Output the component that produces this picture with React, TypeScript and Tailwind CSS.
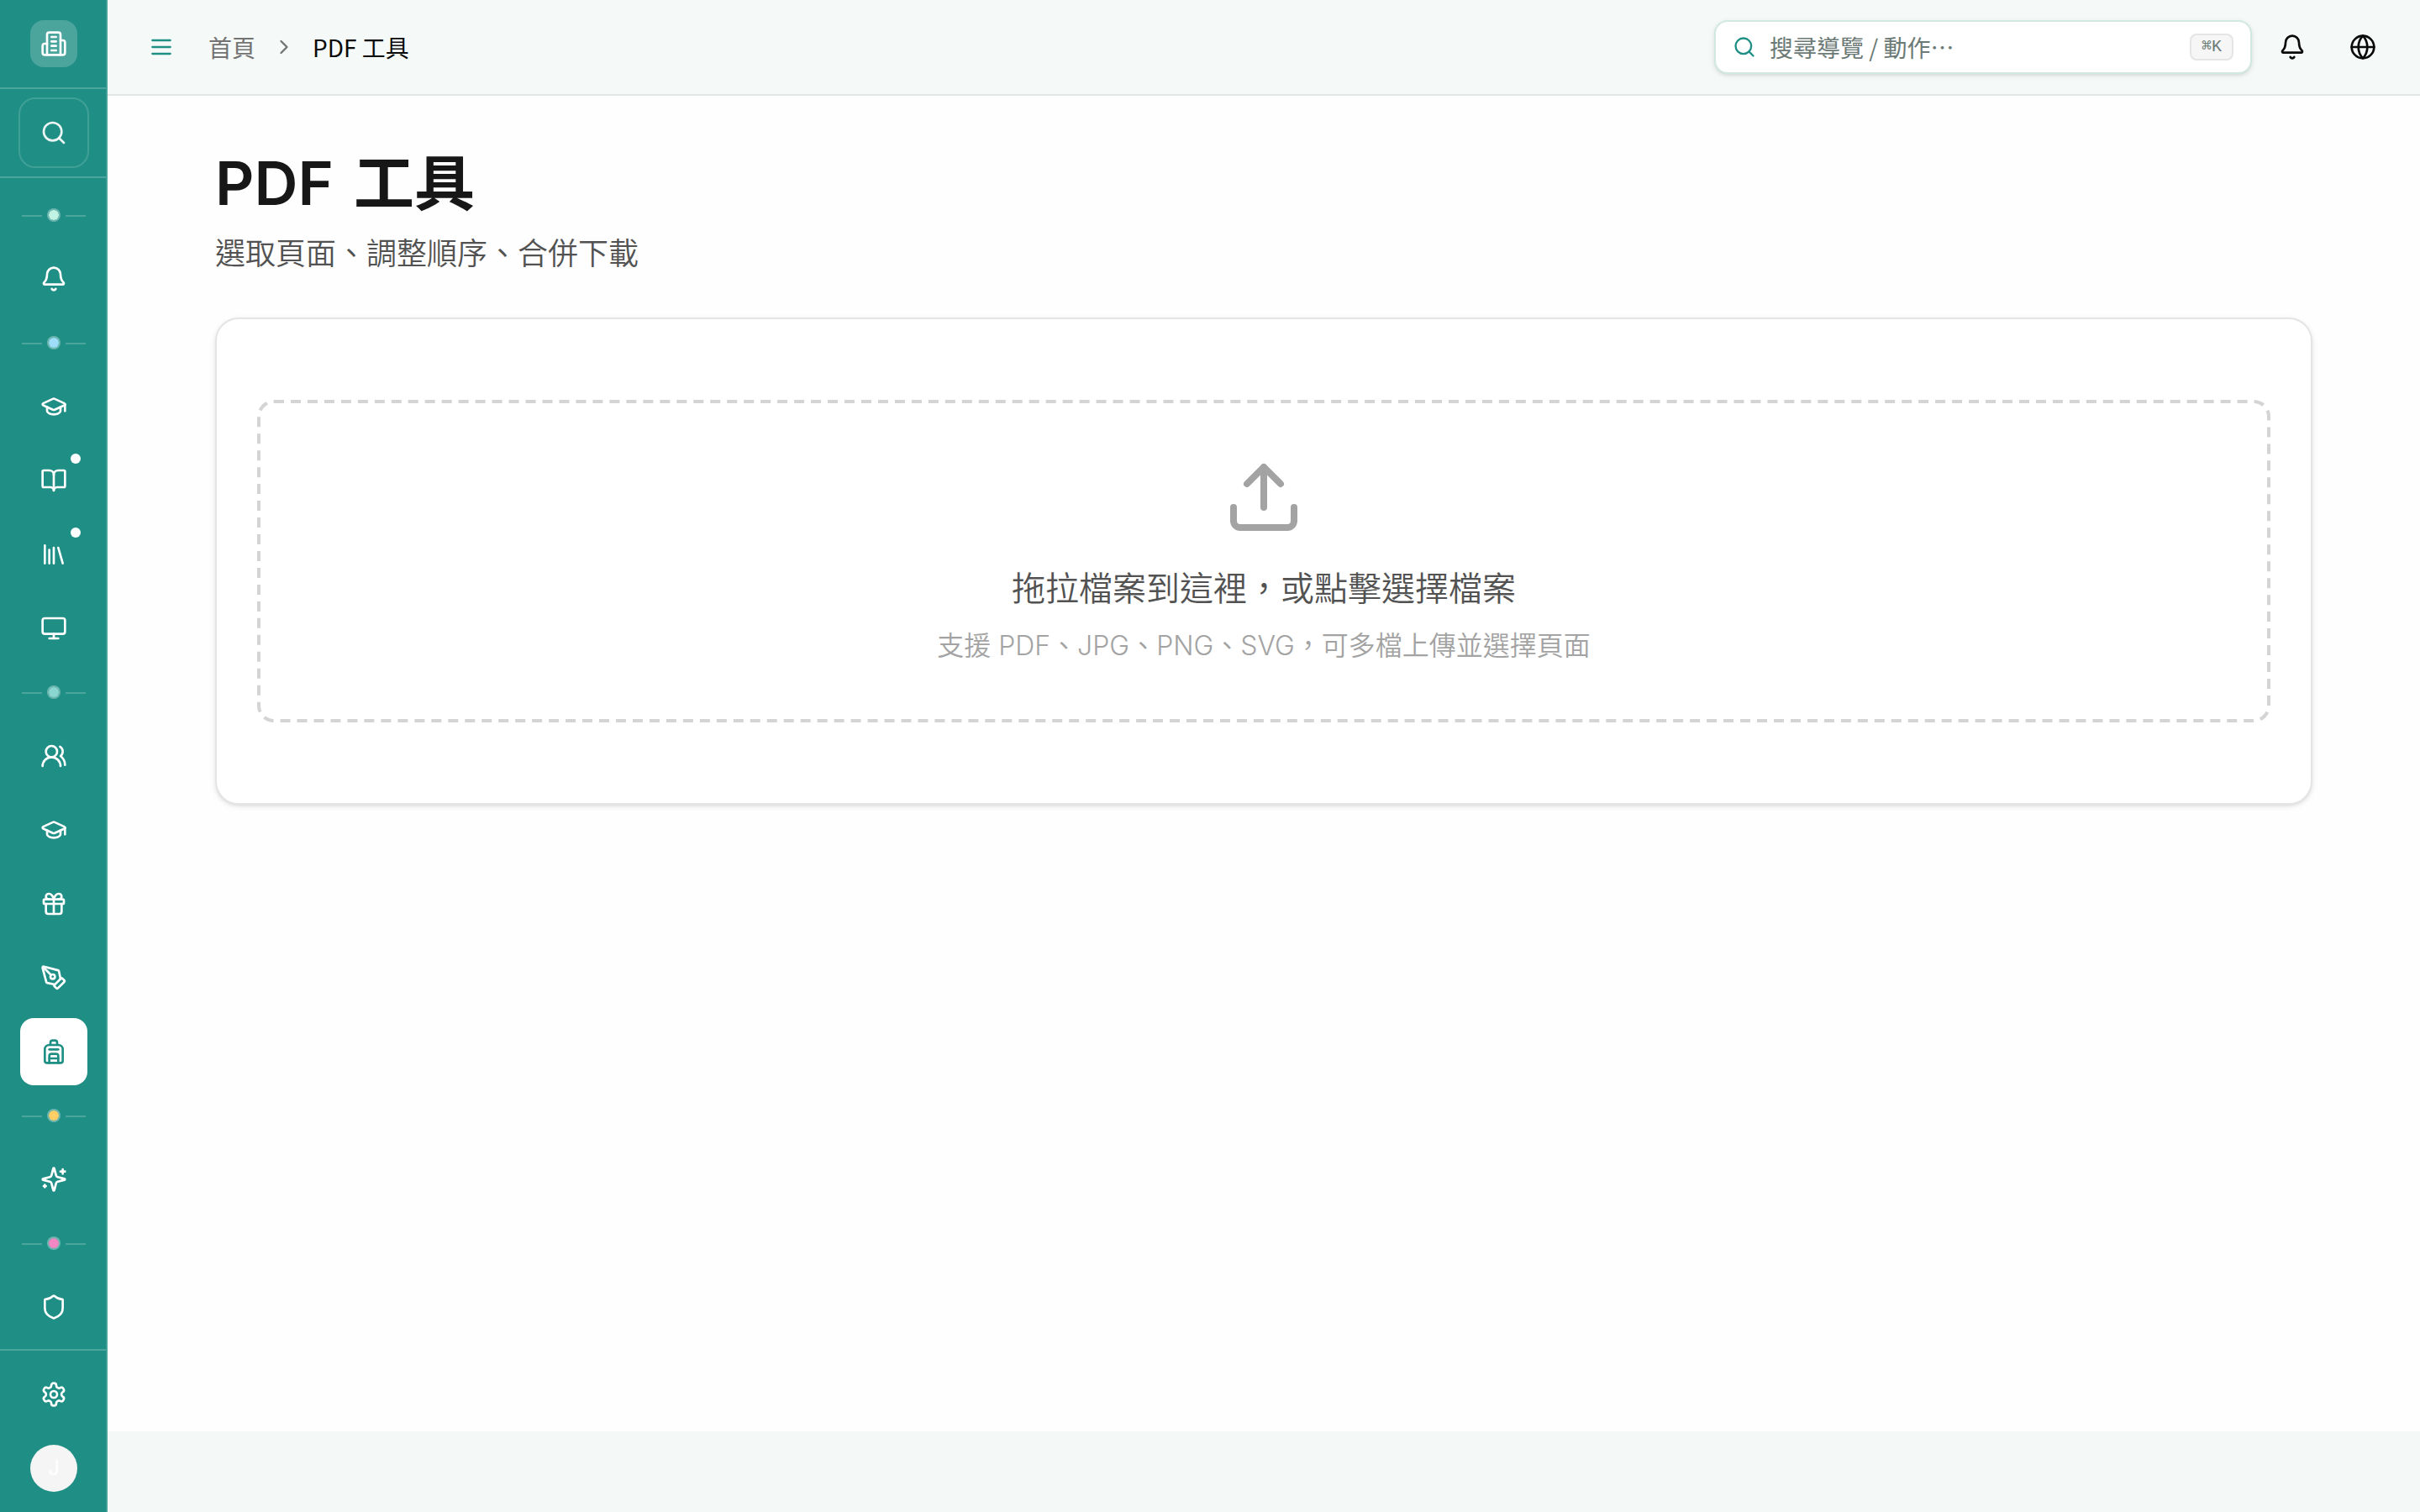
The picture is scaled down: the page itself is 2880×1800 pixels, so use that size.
import React from "react";
import { Bell, GraduationCap, BookOpen, Library, Monitor, UsersRound, Gift, PenTool, Backpack, Shield, Search, Globe, ChevronRight } from "lucide-react";

type IconType = React.ComponentType<{ className?: string; strokeWidth?: number }>;

const svgProps = {
  viewBox: "0 0 24 24",
  fill: "none",
  stroke: "currentColor",
  strokeWidth: 2,
  strokeLinecap: "round" as const,
  strokeLinejoin: "round" as const,
};

function BuildingIcon({ className }: { className?: string }) {
  return (
    <svg {...svgProps} className={className}>
      <path d="M6 22V4a2 2 0 0 1 2-2h8a2 2 0 0 1 2 2v18Z" />
      <path d="M6 12H4a2 2 0 0 0-2 2v6a2 2 0 0 0 2 2h2" />
      <path d="M18 9h2a2 2 0 0 1 2 2v9a2 2 0 0 1-2 2h-2" />
      <path d="M10 6h4M10 10h4M10 14h4M10 18h4" />
    </svg>
  );
}

function MenuIcon({ className }: { className?: string }) {
  return (
    <svg {...svgProps} strokeWidth={1.75} className={className}>
      <path d="M4 6h16M4 12h16M4 18h16" />
    </svg>
  );
}

function SparklesIcon({ className }: { className?: string }) {
  return (
    <svg {...svgProps} className={className}>
      <path d="M9.937 15.5A2 2 0 0 0 8.5 14.063l-6.135-1.582a.5.5 0 0 1 0-.962L8.5 9.936A2 2 0 0 0 9.937 8.5l1.582-6.135a.5.5 0 0 1 .963 0L14.063 8.5A2 2 0 0 0 15.5 9.937l6.135 1.581a.5.5 0 0 1 0 .964L15.5 14.063a2 2 0 0 0-1.437 1.437l-1.582 6.135a.5.5 0 0 1-.963 0z" />
      <path d="M20 3v4M22 5h-4M4 17v2M5 18H3" />
    </svg>
  );
}

function GearIcon({ className }: { className?: string }) {
  return (
    <svg {...svgProps} className={className}>
      <path d="M12.22 2h-.44a2 2 0 0 0-2 2v.18a2 2 0 0 1-1 1.73l-.43.25a2 2 0 0 1-2 0l-.15-.08a2 2 0 0 0-2.73.73l-.22.38a2 2 0 0 0 .73 2.73l.15.1a2 2 0 0 1 1 1.72v.51a2 2 0 0 1-1 1.74l-.15.09a2 2 0 0 0-.73 2.73l.22.38a2 2 0 0 0 2.73.73l.15-.08a2 2 0 0 1 2 0l.43.25a2 2 0 0 1 1 1.73V20a2 2 0 0 0 2 2h.44a2 2 0 0 0 2-2v-.18a2 2 0 0 1 1-1.73l.43-.25a2 2 0 0 1 2 0l.15.08a2 2 0 0 0 2.73-.73l.22-.39a2 2 0 0 0-.73-2.73l-.15-.08a2 2 0 0 1-1-1.74v-.5a2 2 0 0 1 1-1.74l.15-.09a2 2 0 0 0 .73-2.73l-.22-.38a2 2 0 0 0-2.73-.73l-.15.08a2 2 0 0 1-2 0l-.43-.25a2 2 0 0 1-1-1.73V4a2 2 0 0 0-2-2z" />
      <circle cx="12" cy="12" r="3" />
    </svg>
  );
}

function UploadIcon({ className }: { className?: string }) {
  return (
    <svg {...svgProps} className={className}>
      <path d="M21 15v4a2 2 0 0 1-2 2H5a2 2 0 0 1-2-2v-4" />
      <path d="m17 8-5-5-5 5M12 3v12" />
    </svg>
  );
}

function Divider({ color }: { color: string }) {
  return (
    <div className="flex h-14 items-center justify-center gap-1.5">
      <span className="mt-0.5 h-0.5 w-6 bg-white/20" />
      <span className={`size-4 rounded-full border-2 border-white/35 bg-clip-padding ${color}`} />
      <span className="mt-0.5 h-0.5 w-6 bg-white/20" />
    </div>
  );
}

function NavItem({ icon: Icon, active, badge }: { icon: IconType; active?: boolean; badge?: boolean }) {
  return (
    <a className={`relative flex size-20 shrink-0 items-center justify-center rounded-[16px] ${active ? "bg-white text-[#1f8f85]" : "text-white"}`}>
      <Icon className="size-8" />
      {badge && <span className="absolute top-2 right-2 size-3 rounded-full bg-white" />}
    </a>
  );
}

function Sidebar() {
  return (
    <aside className="flex h-full w-32 shrink-0 flex-col border-r-2 border-[#43a198] bg-[#1f8f85]">
      <div className="flex h-[106px] items-center justify-center border-b-2 border-white/20 pl-0.5">
        <div className="flex size-14 items-center justify-center rounded-2xl bg-white/20 text-white">
          <BuildingIcon className="size-8" />
        </div>
      </div>
      <div className="flex h-[106px] items-center justify-center border-b-2 border-white/20 pl-0.5">
        <div className="flex size-[84px] items-center justify-center rounded-[20px] border-2 border-white/15 text-white/90">
          <Search className="size-8" />
        </div>
      </div>
      <nav className="flex flex-1 flex-col items-center gap-2 pt-4 pl-0.5">
        <Divider color="bg-[#c1f3e4]" />
        <NavItem icon={Bell} />
        <Divider color="bg-[#9fdcf8]" />
        <NavItem icon={GraduationCap} />
        <NavItem icon={BookOpen} badge />
        <NavItem icon={Library} badge />
        <NavItem icon={Monitor} />
        <Divider color="bg-[#8ad6d0]" />
        <NavItem icon={UsersRound} />
        <NavItem icon={GraduationCap} />
        <NavItem icon={Gift} />
        <NavItem icon={PenTool} />
        <NavItem icon={Backpack} active />
        <Divider color="bg-[#ffcf66]" />
        <NavItem icon={SparklesIcon} />
        <Divider color="bg-[#f386c4]" />
        <NavItem icon={Shield} />
      </nav>
      <div className="flex h-[194px] flex-col items-center gap-5 border-t-2 border-white/20 pt-3 pl-0.5">
        <NavItem icon={GearIcon} />
        <div className="flex size-14 items-center justify-center rounded-full bg-[#f5f5f5] font-['Inter'] text-2xl text-white">J</div>
      </div>
    </aside>
  );
}

function TopBar() {
  return (
    <header className="flex h-[114px] shrink-0 items-center border-b-2 border-[#e2e7e5] bg-[#f5faf8] pr-8 pl-12">
      <MenuIcon className="size-8 text-[#1f8f85]" />
      <nav className="ml-10 flex items-center gap-5 text-[28px] leading-10">
        <span className="text-[#737373]">首頁</span>
        <ChevronRight className="size-7 text-[#737373]" />
        <span className="text-[#0a0a0a]">PDF 工具</span>
      </nav>
      <div className="ml-auto flex items-center gap-3">
        <div className="flex h-16 w-[640px] items-center rounded-2xl border-2 border-[#d0e9e1] bg-white pr-5 pl-5 shadow-[0_2px_6px_rgba(0,0,0,0.1),0_2px_4px_-2px_rgba(0,0,0,0.1)]">
          <Search className="size-7 text-[#1f8f85]" />
          <span className="ml-4 text-[28px] leading-10 text-[#6b7a76]">搜尋導覽 / 動作⋯</span>
          <kbd className="ml-auto flex h-8 w-[52px] items-center justify-center rounded-lg border-2 border-[#e3e6e4] bg-[#f5f6f5] font-['Liberation_Mono','DejaVu_Sans_Mono',monospace] text-xl leading-none text-[#6b7a76]">⌘K</kbd>
        </div>
        <button className="flex size-[72px] items-center justify-center text-[#0a0a0a]"><Bell className="size-8" /></button>
        <button className="flex size-[72px] items-center justify-center text-[#0a0a0a]"><Globe className="size-8" /></button>
      </div>
    </header>
  );
}

function DropZone() {
  return (
    <div className="relative flex h-[384px] flex-col items-center pt-[68px]">
      <div className="pointer-events-none absolute top-0 left-0 h-1/2 w-1/2 origin-top-left scale-200 rounded-[10px] border-2 border-dashed border-[#d4d4d4]" />
      <UploadIcon className="size-24 text-[#a3a3a3]" />
      <p className="mt-[30px] text-[40px] leading-14 font-[350] text-[#525252]">拖拉檔案到這裡，或點擊選擇檔案</p>
      <p className="mt-[19px] font-['Inter','Noto_Sans_CJK_TC',sans-serif] text-[32px] leading-12 font-[350] text-[#a3a3a3]">支援 PDF、JPG、PNG、SVG，可多檔上傳並選擇頁面</p>
    </div>
  );
}

export default function App() {
  return (
    <div lang="zh-TW" className="flex h-[1800px] w-[2880px] overflow-hidden bg-[#f4f8f7] font-['Noto_Sans_CJK_TC',sans-serif]">
      <Sidebar />
      <div className="flex min-w-0 flex-1 flex-col">
        <TopBar />
        <main className="h-[1590px] bg-[#fefefe] px-32 pt-16">
          <h1 className="font-['Inter','Noto_Sans_CJK_TC',sans-serif] text-[72px] leading-20 font-semibold text-[#171717] [word-spacing:6px]">PDF 工具</h1>
          <p className="mt-[13px] mb-[51px] text-4xl leading-14 font-[350] text-[#525252]">選取頁面、調整順序、合併下載</p>
          <section className="rounded-[28px] border-2 border-[#e5e5e5] bg-white px-12 py-24 shadow-[0_2px_6px_rgba(0,0,0,0.1),0_2px_4px_-2px_rgba(0,0,0,0.1)]">
            <DropZone />
          </section>
        </main>
      </div>
    </div>
  );
}
